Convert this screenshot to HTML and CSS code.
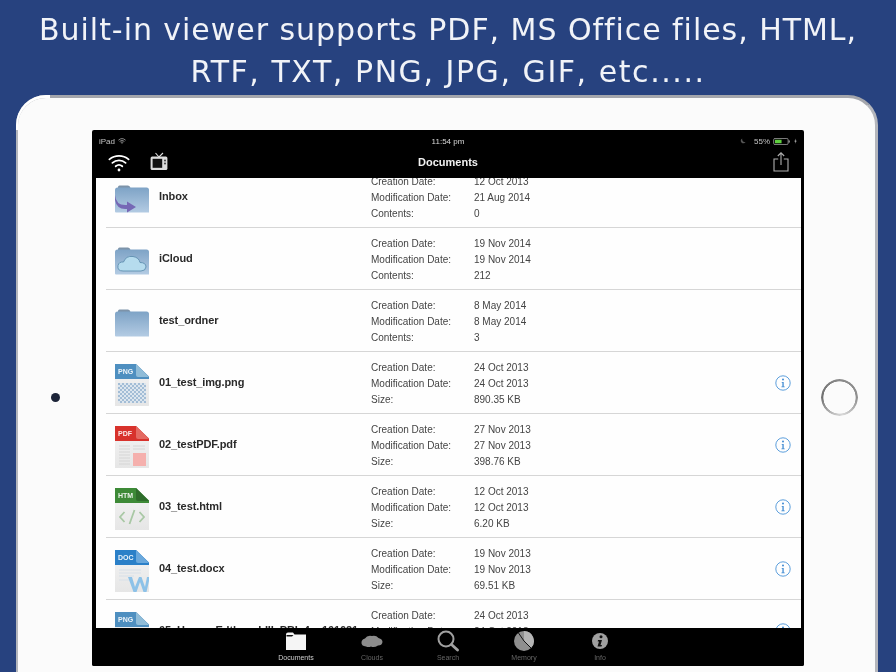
FILE: index.html
```html
<!DOCTYPE html>
<html lang="en">
<head>
<meta charset="utf-8">
<title>Built-in viewer</title>
<link rel="stylesheet" href="styles.css">
</head>
<body>
<svg class="defs" width="0" height="0" aria-hidden="true">
  <defs>
    <linearGradient id="folderFill" x1="0" y1="0" x2="0" y2="1">
      <stop offset="0" stop-color="#7ea3c6"/><stop offset="1" stop-color="#b3cbe3"/>
    </linearGradient>
    <linearGradient id="pageFill" x1="0" y1="0" x2="0" y2="1">
      <stop offset="0" stop-color="#f4f4f4"/><stop offset="1" stop-color="#e6e6e6"/>
    </linearGradient>
    <pattern id="checks" width="4" height="4" patternUnits="userSpaceOnUse">
      <rect width="4" height="4" fill="#dde6ee"/>
      <rect width="2" height="2" fill="#a3bdd6"/>
      <rect x="2" y="2" width="2" height="2" fill="#a3bdd6"/>
    </pattern>
    <symbol id="folder" viewBox="0 0 36 28">
      <path d="M4 2Q4 .5 5.500 .5H14Q16 .5 16.500 3H4Z" fill="#7d93a9"/>
      <path d="M1 5Q1 2.500 3.500 2.500H32.500Q35 2.500 35 5V27.500H2Q1 27.500 1 26.500Z" fill="url(#folderFill)"/>
    </symbol>
    <symbol id="info" viewBox="0 0 16 16">
      <circle cx="8" cy="8" r="7.200" fill="none" stroke="#5d9fdc" stroke-width="1"/>
      <circle cx="8" cy="4.600" r="1" fill="#3f8ad2"/>
      <path d="M6.700 7H8.700V11.500H9.700V12.300H6.400V11.500H7.400V7.800H6.700Z" fill="#3f8ad2"/>
    </symbol>
  </defs>
</svg>

<h1 class="headline">Built-in viewer supports PDF, MS Office files, HTML,<br><span class="headline-second">RTF, TXT, PNG, JPG, GIF, etc.....</span></h1>

<div class="device">
  <div class="bezel bezel-left"><span class="camera"></span></div>

  <main class="screen">
    <div class="statusbar">
      <div class="status-side">
        <span>iPad</span>
        <svg class="status-wifi" viewBox="0 0 10 7"><path d="M.5 2.500Q5-1.500 9.500 2.500M2 4Q5 1.500 8 4M3.500 5.300Q5 4.200 6.500 5.300" fill="none" stroke="#bbb" stroke-width=".9"/><circle cx="5" cy="6.300" r=".6" fill="#bbb"/></svg>
      </div>
      <span class="clock">11:54 pm</span>
      <div class="status-side status-right">
        <svg class="moon" viewBox="0 0 8 8"><path d="M3 .5A3.500 3.500 0 1 0 7.500 5.500 4 4 0 0 1 3 .5Z" fill="#555"/></svg>
        <span>55%</span>
        <svg class="battery" viewBox="0 0 20 8"><rect x=".5" y=".5" width="16.500" height="7" rx="1.500" fill="none" stroke="#bbb" stroke-width=".8"/><rect x="2" y="2" width="7.500" height="4" fill="#5fd03f"/><rect x="17.600" y="2.800" width="1.200" height="2.400" fill="#bbb"/></svg>
        <svg class="bolt" viewBox="0 0 4 7"><path d="M2.500 0 .5 4H2L1.500 7 3.500 3H2Z" fill="#ccc"/></svg>
      </div>
    </div>

    <div class="navbar">
      <div class="nav-left">
        <svg class="nav-wifi" viewBox="0 0 22 20"><path d="M1.400 7.400A15 15 0 0 1 20.600 7.400M4.400 10.900A10 10 0 0 1 17.600 10.900M7.700 14.300A5 5 0 0 1 14.300 14.300" fill="none" stroke="#fff" stroke-width="1.800" stroke-linecap="round"/><circle cx="11" cy="18" r="1.400" fill="#fff"/></svg>
        <svg class="nav-tv" viewBox="0 0 18 19"><path d="M5.500 1 9 5 13 1" fill="none" stroke="#ddd" stroke-width="1.100"/><rect x=".6" y="4.600" width="16.800" height="13.400" rx="1.500" fill="#dcdcdc"/><rect x="2.600" y="6.800" width="9.600" height="9" fill="#111"/><circle cx="15" cy="8.500" r=".9" fill="#333"/><circle cx="15" cy="11.500" r=".9" fill="#333"/></svg>
      </div>
      <span class="nav-title">Documents</span>
      <svg class="nav-share" viewBox="0 0 16 20"><path d="M5.200 7H1V19H15V7H10.800M8 13V1M4.800 4 8 .8 11.200 4" fill="none" stroke="#b0b0b0" stroke-width="1.100"/></svg>
    </div>

    <div class="viewport">
      <ul class="rows">
        <li class="row">
          <svg class="thumb folder" viewBox="0 0 36 28">
            <use href="#folder"/>
            <path d="M1 10Q2 21 13 20V16.500L22 22 13 27.500V24Q3 25 1 15Z" fill="#7668b5"/>
          </svg>
          <span class="name">Inbox</span>
          <dl class="meta"><dt>Creation Date:</dt><dd>12 Oct 2013</dd><dt>Modification Date:</dt><dd>21 Aug 2014</dd><dt>Contents:</dt><dd>0</dd></dl>
        </li>
        <li class="row">
          <svg class="thumb folder" viewBox="0 0 36 28">
            <use href="#folder"/>
            <path d="M9 24Q3 24 4 18.500 5 14.500 9.500 15 12 8.500 19 9.500 25 10.500 26 15.500 32 15.500 32 20 31.500 24 27 24Z" fill="#b6dcee" stroke="#5f8fb0" stroke-width=".9"/>
          </svg>
          <span class="name">iCloud</span>
          <dl class="meta"><dt>Creation Date:</dt><dd>19 Nov 2014</dd><dt>Modification Date:</dt><dd>19 Nov 2014</dd><dt>Contents:</dt><dd>212</dd></dl>
        </li>
        <li class="row">
          <svg class="thumb folder" viewBox="0 0 36 28"><use href="#folder"/></svg>
          <span class="name">test_ordner</span>
          <dl class="meta"><dt>Creation Date:</dt><dd>8 May 2014</dd><dt>Modification Date:</dt><dd>8 May 2014</dd><dt>Contents:</dt><dd>3</dd></dl>
        </li>
        <li class="row">
          <svg class="thumb file" viewBox="0 0 36 44">
            <path d="M1 1H23L35 15V43H1Z" fill="url(#pageFill)"/>
            <path d="M1 1H22L35 13.500V16H1Z" fill="#4e8fc0"/>
            <path d="M22 1 35 14H24Q22 14 22 12Z" fill="#8fbcd8"/>
            <rect x="4" y="20" width="28" height="20" fill="url(#checks)"/>
            <text class="file-tag" x="4" y="11">PNG</text>
          </svg>
          <span class="name">01_test_img.png</span>
          <dl class="meta"><dt>Creation Date:</dt><dd>24 Oct 2013</dd><dt>Modification Date:</dt><dd>24 Oct 2013</dd><dt>Size:</dt><dd>890.35 KB</dd></dl>
          <svg class="info"><use href="#info"/></svg>
        </li>
        <li class="row">
          <svg class="thumb file" viewBox="0 0 36 44">
            <path d="M1 1H23L35 15V43H1Z" fill="url(#pageFill)"/>
            <path d="M1 1H22L35 13.500V16H1Z" fill="#d8322c"/>
            <path d="M22 1 35 14H24Q22 14 22 12Z" fill="#e46a62"/>
            <path d="M5 21H16M5 24H16M5 27H16M5 30H16M5 33H16M5 36H16M5 39H16M19 21H31M19 24H31" stroke="#d6d6d6" stroke-width="1.200"/>
            <rect x="19" y="28" width="13" height="13" fill="#f5b0ad"/>
            <text class="file-tag" x="4" y="11">PDF</text>
          </svg>
          <span class="name">02_testPDF.pdf</span>
          <dl class="meta"><dt>Creation Date:</dt><dd>27 Nov 2013</dd><dt>Modification Date:</dt><dd>27 Nov 2013</dd><dt>Size:</dt><dd>398.76 KB</dd></dl>
          <svg class="info"><use href="#info"/></svg>
        </li>
        <li class="row">
          <svg class="thumb file" viewBox="0 0 36 44">
            <path d="M1 1H23L35 15V43H1Z" fill="url(#pageFill)"/>
            <path d="M1 1H22L35 13.500V16H1Z" fill="#3d8a37"/>
            <path d="M22 1 35 14H24Q22 14 22 12Z" fill="#2f6d2b"/>
            <path d="M10.500 25 6 30 10.500 35M25.500 25 30 30 25.500 35M20.500 23 15.500 37" fill="none" stroke="#a9c8a5" stroke-width="1.800"/>
            <text class="file-tag" x="4" y="11">HTM</text>
          </svg>
          <span class="name">03_test.html</span>
          <dl class="meta"><dt>Creation Date:</dt><dd>12 Oct 2013</dd><dt>Modification Date:</dt><dd>12 Oct 2013</dd><dt>Size:</dt><dd>6.20 KB</dd></dl>
          <svg class="info"><use href="#info"/></svg>
        </li>
        <li class="row">
          <svg class="thumb file" viewBox="0 0 36 44">
            <path d="M1 1H23L35 15V43H1Z" fill="url(#pageFill)"/>
            <path d="M1 1H22L35 13.500V16H1Z" fill="#2b80c8"/>
            <path d="M22 1 35 14H24Q22 14 22 12Z" fill="#6aa8dc"/>
            <path d="M5 21H27M5 24H27M5 27H20M5 31H15" stroke="#d8e0e8" stroke-width="1.200"/>
            <path d="M14 28H18L21 38 25 28H27.500L31 38 33 28H35V32L32.500 43H29.500L26 33 22.500 43H19.500Z" fill="#8dc2e8"/>
            <text class="file-tag" x="4" y="11">DOC</text>
          </svg>
          <span class="name">04_test.docx</span>
          <dl class="meta"><dt>Creation Date:</dt><dd>19 Nov 2013</dd><dt>Modification Date:</dt><dd>19 Nov 2013</dd><dt>Size:</dt><dd>69.51 KB</dd></dl>
          <svg class="info"><use href="#info"/></svg>
        </li>
        <li class="row">
          <svg class="thumb file" viewBox="0 0 36 44">
            <path d="M1 1H23L35 15V43H1Z" fill="url(#pageFill)"/>
            <path d="M1 1H22L35 13.500V16H1Z" fill="#4e8fc0"/>
            <path d="M22 1 35 14H24Q22 14 22 12Z" fill="#8fbcd8"/>
            <text class="file-tag" x="4" y="11">PNG</text>
          </svg>
          <span class="name">05_Hanse_Edtkun_LIII_PBI_4a_101621</span>
          <dl class="meta"><dt>Creation Date:</dt><dd>24 Oct 2013</dd><dt>Modification Date:</dt><dd>24 Oct 2013</dd><dt>Size:</dt><dd>1.21 MB</dd></dl>
          <svg class="info"><use href="#info"/></svg>
        </li>
      </ul>
    </div>

    <nav class="tabbar">
      <a class="tab tab-active">
        <svg viewBox="0 0 22 19"><path d="M1 3Q1 1 3 1H8L9.500 3H21V18.500H1Z" fill="#f5f5f5"/><path d="M1.500 3.500H8.500L7 5H1.500Z" fill="#111"/></svg>
        <span>Documents</span>
      </a>
      <a class="tab">
        <svg viewBox="0 0 22 19"><path d="M5 15Q0 14.500 .5 10.500 1 7.500 4 7 6 3.500 11 4.500 15 3.500 17.500 6.500 21.500 7.500 21.500 10.500 21 14 17 14 13 16.500 10 15 7.500 16 5 15Z" fill="#8c8c8c"/></svg>
        <span>Clouds</span>
      </a>
      <a class="tab">
        <svg viewBox="0 0 22 22"><circle cx="9" cy="9" r="7.500" fill="none" stroke="#a0a0a0" stroke-width="2"/><path d="M14.500 14.500 20.500 20" stroke="#a0a0a0" stroke-width="2.800" stroke-linecap="round"/></svg>
        <span>Search</span>
      </a>
      <a class="tab">
        <svg viewBox="0 0 22 22"><circle cx="11" cy="11" r="10" fill="#8f8f8f"/><path d="M11 11 18 18A10 10 0 0 0 11 1Z" fill="#b5b5b5"/><path d="M5.500 3 11 11 18 18" fill="none" stroke="#111" stroke-width="1"/></svg>
        <span>Memory</span>
      </a>
      <a class="tab">
        <svg viewBox="0 0 22 22"><circle cx="11" cy="11" r="8" fill="#a0a0a0"/><circle cx="12" cy="6.800" r="1.500" fill="#111"/><path d="M9 10H13L11.500 15H13L12.500 16.500H8.500L10 11.500H8.700Z" fill="#111"/></svg>
        <span>Info</span>
      </a>
    </nav>
  </main>

  <div class="bezel bezel-right"><span class="home"></span></div>
</div>
</body>
</html>
```
FILE: styles.css
```css
* { box-sizing: border-box; }
html, body { margin: 0; padding: 0; }
body {
  width: 896px;
  height: 672px;
  overflow: hidden;
  background: #27427f;
  font-family: "Liberation Sans", Arial, sans-serif;
}
.defs { position: absolute; }

.headline {
  margin: 0;
  padding-top: 9px;
  height: 95px;
  color: #f1f3f8;
  font-family: "DejaVu Sans", sans-serif;
  font-weight: 400;
  font-size: 30px;
  letter-spacing: .95px;
  line-height: 42px;
  text-align: center;
  white-space: nowrap;
  filter: blur(.4px);
}
.headline-second { letter-spacing: 1.55px; }

.device {
  position: relative;
  display: flex;
  align-items: flex-start;
  width: 862px;
  height: 606px;
  margin-left: 16px;
  padding-top: 32px;
  background: #fbfbfb;
  border-top: 3px solid #a4a6ac;
  border-left: 2px solid #b4b6bc;
  border-right: 3px solid #b4b6bc;
  border-radius: 30px 30px 0 0;
}
.device::after {
  content: "";
  position: absolute;
  top: -3px;
  left: -2px;
  width: 32px;
  height: 32px;
  border-top: 3px solid #fff;
  border-left: 2px solid #fff;
  border-radius: 30px 0 0 0;
}
.bezel { display: flex; align-items: center; justify-content: center; flex: none; height: 534px; }
.bezel-left { width: 74px; padding-right: 0; }
.bezel-right { width: 71px; }
.camera {
  width: 9px;
  height: 9px;
  border-radius: 50%;
  background: #1c2438;
  filter: blur(.4px);
}
.home {
  width: 37px;
  height: 37px;
  border-radius: 50%;
  background: conic-gradient(#8a8a8a 0deg, #8f8f8f 90deg, #d8d8d8 170deg, #c0c0c0 200deg, #707070 270deg, #8a8a8a 360deg);
  -webkit-mask: radial-gradient(circle, transparent 15.800px, #000 16.400px);
  mask: radial-gradient(circle, transparent 15.800px, #000 16.400px);
}

.screen {
  display: flex;
  flex-direction: column;
  flex: none;
  width: 712px;
  height: 536px;
  background: #000;
  border-radius: 2px;
  overflow: hidden;
  filter: blur(.4px);
}

.statusbar {
  display: grid;
  grid-template-columns: 1fr auto 1fr;
  align-items: center;
  height: 20px;
  padding: 2px 7px 0 7px;
  color: #c4c4c4;
  font-size: 8px;
}
.status-side { display: flex; align-items: center; gap: 3px; }
.status-right { justify-content: flex-end; }
.status-wifi { width: 8px; height: 6px; }
.moon { width: 6px; height: 6px; margin-right: 5px; }
.battery { width: 18px; height: 7px; }
.bolt { width: 3px; height: 6px; }
.clock { color: #d8d8d8; }

.navbar {
  position: relative;
  display: flex;
  align-items: center;
  justify-content: space-between;
  height: 28px;
  padding: 0 15px 5px 16px;
}
.nav-left { display: flex; align-items: center; gap: 20px; }
.nav-wifi { width: 22px; height: 20px; }
.nav-tv { width: 18px; height: 19px; }
.nav-share { width: 16px; height: 20px; }
.nav-title {
  position: absolute;
  left: 0;
  right: 0;
  text-align: center;
  color: #f2f2f2;
  font-size: 11px;
  font-weight: 700;
}

.viewport {
  flex: none;
  width: 705px;
  height: 450px;
  margin-left: 4px;
  background: #fefefe;
  overflow: hidden;
}
.rows {
  list-style: none;
  margin: -12px 0 0;
  padding: 0;
}
.row {
  display: flex;
  align-items: center;
  height: 62px;
  margin-left: 10px;
  padding: 0 10px 0 8px;
  border-bottom: 1px solid #d6d6d6;
}
.thumb { flex: none; width: 36px; margin-top: 4px; }
.thumb.folder { height: 28px; }
.thumb.file { height: 44px; }
.name {
  flex: none;
  width: 212px;
  margin-left: 9px;
  padding-bottom: 2px;
  color: #2a2a2a;
  font-size: 11px;
  font-weight: 700;
  letter-spacing: -.1px;
  white-space: nowrap;
}
.meta {
  flex: none;
  display: grid;
  grid-template-columns: 103px 120px;
  margin: 0;
  padding-top: 2px;
  color: #444;
  font-size: 10px;
  line-height: 16px;
}
.meta dt, .meta dd { margin: 0; }
.info { flex: none; width: 16px; height: 16px; margin-left: auto; }
.file-tag { fill: #fff; fill-opacity: .9; font-family: "Liberation Sans", sans-serif; font-size: 7px; font-weight: 700; }

.tabbar {
  display: flex;
  justify-content: center;
  flex: none;
  height: 38px;
  background: #000;
}
.tab {
  display: flex;
  flex-direction: column;
  align-items: center;
  justify-content: flex-end;
  width: 76px;
  padding-bottom: 5px;
  color: #666;
  font-size: 7px;
}
.tab svg { width: 22px; height: 22px; margin-bottom: 2px; }
.tab-active { color: #cfcfcf; }
```
